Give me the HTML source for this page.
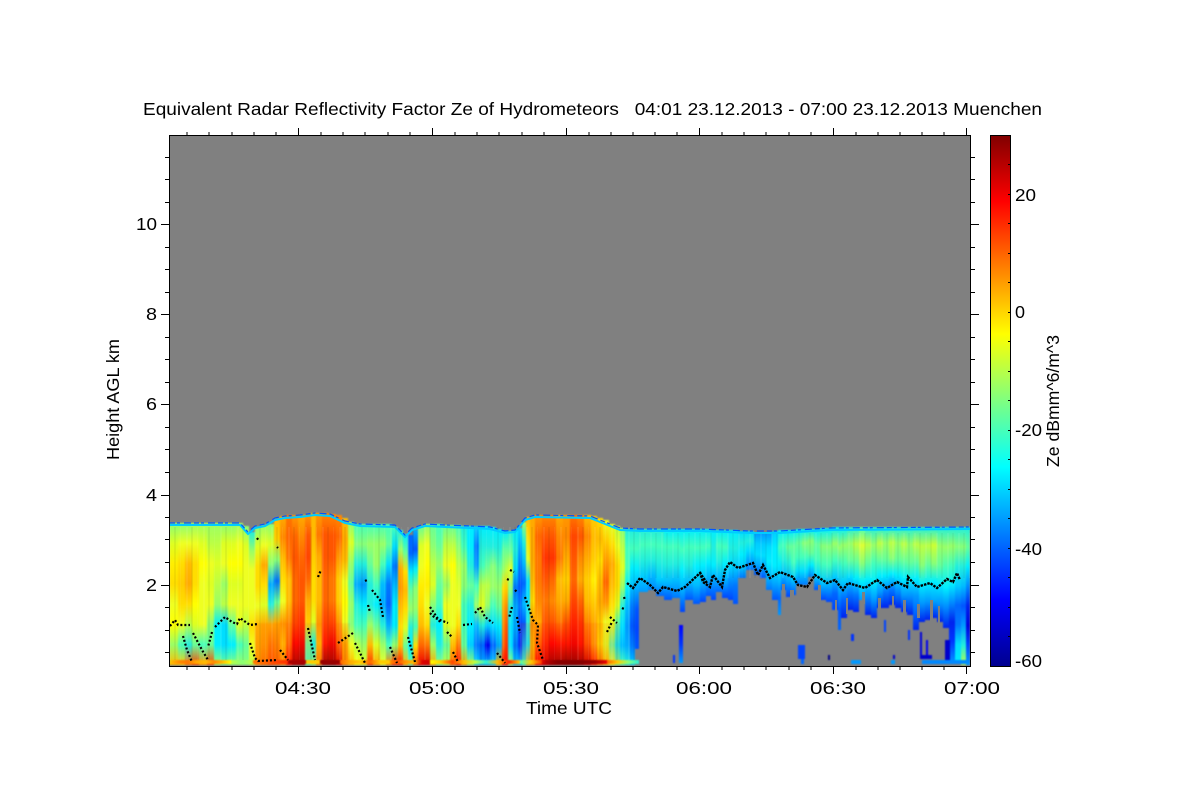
<!DOCTYPE html>
<html><head><meta charset="utf-8"><title>Radar Reflectivity</title>
<style>
html,body{margin:0;padding:0;background:#fff}
body{width:1200px;height:800px;overflow:hidden;position:relative}
#g{position:absolute;left:169px;top:135px;width:801px;height:531px;background:#808080;overflow:hidden}
#d{position:absolute;left:-169px;top:-135px;width:1200px;height:665px;filter:blur(.7px)}
#d i{position:absolute;display:block;bottom:0}
#d i.r{bottom:auto}
#s{position:absolute;left:0;top:392px;width:470px;height:133px;background:repeating-linear-gradient(90deg,rgba(255,255,255,.07) 0 2px,rgba(0,0,0,0) 2px 5px,rgba(0,0,0,.05) 5px 7px,rgba(0,0,0,0) 7px 11px,rgba(255,255,255,.05) 11px 12px,rgba(0,0,0,0) 12px 17px)}
#t{position:absolute;left:470px;top:398px;width:331px;height:45px;background:repeating-linear-gradient(90deg,rgba(255,255,255,.07) 0 2px,rgba(0,0,0,0) 2px 5px,rgba(0,0,0,.04) 5px 7px,rgba(0,0,0,0) 7px 11px)}
#c{position:absolute;left:990px;top:135px;width:20px;height:531px;background:linear-gradient(to top,#00008f 0,#00f 12.5%,#0ff 37.5%,#ff0 62.5%,#f00 87.5%,#800000 100%)}
svg{position:absolute;left:0;top:0}
text{font-family:"Liberation Sans",sans-serif;fill:#000}
</style></head><body>
<div id="g"><div id="d">
<i style="left:169px;width:9px;top:523px;background:linear-gradient(#8f7,#df2,#fe0,#fd0,#ef2,#ff0,#9f6,#fb0)"></i>
<i style="left:178px;width:7px;top:523px;background:linear-gradient(#8f7,#ef2,#fd0,#fc0,#fd0,#ef2,#4fb,#fc0)"></i>
<i style="left:185px;width:7px;top:523px;background:linear-gradient(#8f7,#ef2,#fb0,#fa0,#fd0,#bf4,#2ed,#f70)"></i>
<i style="left:192px;width:7px;top:523px;background:linear-gradient(#9f6,#ef2,#fd0,#fd0,#ff0,#df2,#6f9,#f40)"></i>
<i style="left:199px;width:8px;top:523px;background:linear-gradient(#9f6,#df2,#ff0,#ef2,#ef2,#ef2,#4fb,#f90)"></i>
<i style="left:207px;width:7px;top:523px;background:linear-gradient(#9f6,#bf4,#ef2,#df2,#ef2,#8f7,#6f9,#f40)"></i>
<i style="left:214px;width:7px;top:523px;background:linear-gradient(#9f6,#bf4,#df2,#bf4,#9f6,#0ef,#0ef,#9f6)"></i>
<i style="left:221px;width:7px;top:523px;background:linear-gradient(#8f7,#df2,#ef2,#9f6,#bf4,#0df,#0df,#6f9)"></i>
<i style="left:228px;width:8px;top:523px;background:linear-gradient(#8f7,#df2,#ff0,#df2,#ef2,#6f9,#0ef,#8f7)"></i>
<i style="left:236px;width:7px;top:523px;background:linear-gradient(#9f6,#ef2,#ff0,#df2,#ef2,#df2,#4fb,#9f6)"></i>
<i style="left:243px;width:6px;top:526px;background:linear-gradient(#8f7,#df2,#ef2,#ef2,#ef2,#bf4,#6f9,#8f7)"></i>
<i style="left:249px;width:6px;top:532px;background:linear-gradient(#2ed,#9f6,#ef2,#ef2,#ef2,#fd0,#ef2,#bf4)"></i>
<i style="left:255px;width:6px;top:527px;background:linear-gradient(#8f7,#df2,#fd0,#fd0,#ef2,#fb0,#fa0,#f90)"></i>
<i style="left:261px;width:7px;top:525px;background:linear-gradient(#9f6,#ef2,#fa0,#fd0,#df2,#fa0,#f90,#f70)"></i>
<i style="left:268px;width:6px;top:524px;background:linear-gradient(#8f7,#df2,#8f7,#0af,#2ed,#fa0,#f70,#f50)"></i>
<i style="left:274px;width:6px;top:518px;background:linear-gradient(#fb0,#fc0,#8f7,#07f,#6f9,#fa0,#f80,#f60)"></i>
<i style="left:280px;width:6px;top:516px;background:linear-gradient(#fa0,#f80,#fb0,#fd0,#ef2,#f90,#fb0,#f80)"></i>
<i style="left:286px;width:6px;top:515px;background:linear-gradient(#f70,#f60,#f70,#fb0,#fb0,#f80,#f60,#f10)"></i>
<i style="left:292px;width:6px;top:515px;background:linear-gradient(#f90,#f60,#f50,#f60,#f60,#f40,#f00,#a00)"></i>
<i style="left:298px;width:7px;top:515px;background:linear-gradient(#fa0,#f80,#f60,#f50,#f50,#f30,#e00,#900)"></i>
<i style="left:305px;width:6px;top:514px;background:linear-gradient(#f90,#f50,#f40,#f60,#fa0,#fc0,#6f9,#4fb)"></i>
<i style="left:311px;width:5px;top:513px;background:linear-gradient(#fb0,#fb0,#fc0,#fd0,#fd0,#df2,#0ff,#8f7)"></i>
<i style="left:316px;width:6px;top:513px;background:linear-gradient(#f90,#f70,#fa0,#fb0,#fb0,#f90,#fb0,#f70)"></i>
<i style="left:322px;width:7px;top:513px;background:linear-gradient(#f80,#f50,#f50,#f60,#f60,#f40,#f10,#900)"></i>
<i style="left:329px;width:7px;top:514px;background:linear-gradient(#f80,#f50,#f50,#f70,#f70,#f40,#e00,#900)"></i>
<i style="left:336px;width:6px;top:515px;background:linear-gradient(#f80,#f60,#f90,#fc0,#fc0,#f90,#f60,#d00)"></i>
<i style="left:342px;width:6px;top:518px;background:linear-gradient(#fb0,#fa0,#fb0,#ef2,#ff0,#ef2,#fa0,#f80)"></i>
<i style="left:348px;width:6px;top:522px;background:linear-gradient(#8f7,#df2,#9f6,#6f9,#9f6,#8f7,#ef2,#fb0)"></i>
<i style="left:354px;width:6px;top:524px;background:linear-gradient(#4fb,#8f7,#2ed,#0af,#2ed,#4fb,#bf4,#ff0)"></i>
<i style="left:360px;width:7px;top:524px;background:linear-gradient(#4fb,#8f7,#2ed,#09f,#0ef,#4fb,#9f6,#df2)"></i>
<i style="left:367px;width:6px;top:524px;background:linear-gradient(#4fb,#9f6,#6f9,#2ed,#2ed,#9f6,#fb0,#f30)"></i>
<i style="left:373px;width:7px;top:524px;background:linear-gradient(#4fb,#9f6,#9f6,#4fb,#0ef,#6f9,#df2,#fa0)"></i>
<i style="left:380px;width:6px;top:524px;background:linear-gradient(#4fb,#9f6,#4fb,#0bf,#0af,#2ed,#9f6,#ef2)"></i>
<i style="left:386px;width:6px;top:524px;background:linear-gradient(#4fb,#6f9,#0df,#07f,#06f,#0af,#4fb,#f80)"></i>
<i style="left:392px;width:6px;top:527px;background:linear-gradient(#4fb,#0df,#07f,#0bf,#0ef,#0ef,#9f6,#f20)"></i>
<i style="left:398px;width:5px;top:530px;background:linear-gradient(#2ed,#9f6,#fa0,#f90,#fb0,#fd0,#fb0,#f10)"></i>
<i style="left:403px;width:5px;top:534px;background:linear-gradient(#0ef,#6f9,#fd0,#fb0,#fd0,#df2,#6f9,#fb0)"></i>
<i style="left:408px;width:5px;top:535px;background:linear-gradient(#06f,#06f,#0ef,#6f9,#9f6,#2ed,#0ef,#6f9)"></i>
<i style="left:413px;width:5px;top:530px;background:linear-gradient(#0af,#05f,#0ef,#8f7,#9f6,#4fb,#fd0,#f50)"></i>
<i style="left:418px;width:6px;top:526px;background:linear-gradient(#6f9,#df2,#ef2,#fe0,#fd0,#fb0,#f60,#e00)"></i>
<i style="left:424px;width:6px;top:524px;background:linear-gradient(#8f7,#ef2,#ff0,#fe0,#ef2,#fd0,#f70,#d00)"></i>
<i style="left:430px;width:6px;top:524px;background:linear-gradient(#6f9,#8f7,#bf4,#df2,#8f7,#2ed,#9f6,#fa0)"></i>
<i style="left:436px;width:7px;top:524px;background:linear-gradient(#4fb,#6f9,#9f6,#6f9,#4fb,#0ef,#2ed,#8f7)"></i>
<i style="left:443px;width:7px;top:525px;background:linear-gradient(#6f9,#bf4,#ef2,#9f6,#ef2,#df2,#6f9,#bf4)"></i>
<i style="left:450px;width:6px;top:525px;background:linear-gradient(#6f9,#bf4,#ff0,#ef2,#ef2,#ef2,#fb0,#f60)"></i>
<i style="left:456px;width:5px;top:525px;background:linear-gradient(#4fb,#8f7,#bf4,#df2,#ef2,#fd0,#f70,#f10)"></i>
<i style="left:461px;width:6px;top:526px;background:linear-gradient(#2ed,#4fb,#9f6,#8f7,#4fb,#4fb,#6f9,#fa0)"></i>
<i style="left:467px;width:7px;top:526px;background:linear-gradient(#0ef,#0ef,#2ed,#6f9,#2ed,#0ef,#0cf,#9f6)"></i>
<i style="left:474px;width:5px;top:526px;background:linear-gradient(#0cf,#07f,#09f,#4fb,#9f6,#0bf,#07f,#0df)"></i>
<i style="left:479px;width:6px;top:526px;background:linear-gradient(#0ef,#2ed,#4fb,#bf4,#df2,#2ed,#06f,#0af)"></i>
<i style="left:485px;width:5px;top:526px;background:linear-gradient(#0ef,#2ed,#6f9,#bf4,#9f6,#0cf,#00e,#0bf)"></i>
<i style="left:490px;width:6px;top:527px;background:linear-gradient(#0ef,#2ed,#8f7,#9f6,#4fb,#0df,#06f,#0cf)"></i>
<i style="left:496px;width:6px;top:529px;background:linear-gradient(#0ef,#2ed,#6f9,#9f6,#6f9,#0ef,#0af,#fb0)"></i>
<i style="left:502px;width:3px;top:531px;background:linear-gradient(#0ef,#6f9,#9f6,#fd0,#fa0,#f80,#f60,#f00)"></i>
<i style="left:505px;width:3px;top:531px;background:linear-gradient(#0ef,#6f9,#bf4,#fc0,#f80,#f50,#f30,#f00)"></i>
<i style="left:508px;width:5px;top:531px;background:linear-gradient(#2ed,#6f9,#df2,#8f7,#2ed,#0df,#0df,#9f6)"></i>
<i style="left:513px;width:5px;top:530px;background:linear-gradient(#0ef,#2ed,#0df,#07f,#0af,#0af,#07f,#0cf)"></i>
<i style="left:518px;width:4px;top:528px;background:linear-gradient(#0df,#0af,#07f,#05f,#07f,#04f,#03f,#0cf)"></i>
<i style="left:522px;width:4px;top:522px;background:linear-gradient(#9f6,#2ed,#0bf,#06f,#0bf,#05f,#0af,#4fb)"></i>
<i style="left:526px;width:4px;top:517px;background:linear-gradient(#fb0,#fd0,#df2,#0df,#0df,#2ed,#0ef,#fb0)"></i>
<i style="left:530px;width:5px;top:516px;background:linear-gradient(#fa0,#fa0,#fa0,#fb0,#fd0,#f90,#fb0,#f90)"></i>
<i style="left:535px;width:7px;top:515px;background:linear-gradient(#f90,#f60,#f70,#f70,#f80,#fa0,#f60,#f00)"></i>
<i style="left:542px;width:7px;top:515px;background:linear-gradient(#f80,#f50,#f30,#f50,#f70,#f50,#f20,#c00)"></i>
<i style="left:549px;width:7px;top:515px;background:linear-gradient(#f80,#f50,#f30,#f60,#f80,#f50,#f00,#900)"></i>
<i style="left:556px;width:7px;top:515px;background:linear-gradient(#fa0,#f80,#f70,#fb0,#fa0,#f70,#f10,#900)"></i>
<i style="left:563px;width:7px;top:515px;background:linear-gradient(#f90,#f80,#fa0,#fc0,#fa0,#f50,#f10,#800)"></i>
<i style="left:570px;width:7px;top:515px;background:linear-gradient(#f70,#f40,#f50,#f60,#f40,#f20,#e00,#800)"></i>
<i style="left:577px;width:7px;top:515px;background:linear-gradient(#f80,#f50,#f80,#fa0,#f60,#f30,#f10,#900)"></i>
<i style="left:584px;width:7px;top:515px;background:linear-gradient(#fb0,#f80,#fa0,#fc0,#fb0,#f80,#f50,#c00)"></i>
<i style="left:591px;width:6px;top:516px;background:linear-gradient(#fc0,#fb0,#fc0,#fe0,#fc0,#fa0,#f90,#f20)"></i>
<i style="left:597px;width:6px;top:518px;background:linear-gradient(#fd0,#fb0,#fd0,#fb0,#fa0,#fc0,#fd0,#f70)"></i>
<i style="left:603px;width:6px;top:520px;background:linear-gradient(#ef2,#fc0,#f90,#f60,#f90,#ef2,#df2,#fb0)"></i>
<i style="left:609px;width:6px;top:524px;background:linear-gradient(#df2,#fd0,#fa0,#fb0,#fd0,#df2,#6f9,#ef2)"></i>
<i style="left:615px;width:5px;top:526px;background:linear-gradient(#bf4,#ef2,#fd0,#fd0,#df2,#4fb,#0ef,#8f7)"></i>
<i style="left:620px;width:5px;top:528px;background:linear-gradient(#8f7,#bf4,#df2,#9f6,#2ed,#0df,#0bf,#4fb)"></i>
<i style="left:625px;width:5px;top:529px;background:linear-gradient(#2ed,#4fb,#4fb,#0ef,#0bf,#09f,#0af,#2ed)"></i>
<i style="left:630px;width:5px;top:529px;background:linear-gradient(#2ed,#4fb,#0ef,#0bf,#07f,#05f,#07f,#0cf)"></i>
<i style="left:635px;width:4px;top:529px;height:120px;bottom:auto;background:linear-gradient(#2ed,#4fb,#0ef,#0af,#05f,#04f,#05f)"></i>

<i class="r" style="left:639px;width:9px;top:529px;height:63px;background:linear-gradient(#2ed,#4fb,#2ed,#0cf,#09f)"></i>
<i class="r" style="left:648px;width:8px;top:529px;height:61px;background:linear-gradient(#2ed,#4fb,#2ed,#0bf,#08f)"></i>
<i class="r" style="left:656px;width:8px;top:529px;height:67px;background:linear-gradient(#2ed,#4fb,#2ed,#0cf,#06f)"></i>
<i class="r" style="left:664px;width:8px;top:529px;height:71px;background:linear-gradient(#0ef,#4fb,#2ed,#0bf,#05f)"></i>
<i class="r" style="left:672px;width:8px;top:529px;height:69px;background:linear-gradient(#0ef,#4fb,#2ed,#0bf,#07f)"></i>
<i class="r" style="left:680px;width:5px;top:529px;height:83px;background:linear-gradient(#0ef,#4fb,#0ef,#0af,#04f)"></i>
<i class="r" style="left:685px;width:8px;top:529px;height:71px;background:linear-gradient(#0ef,#4fb,#2ed,#0bf,#05f)"></i>
<i class="r" style="left:693px;width:7px;top:529px;height:75px;background:linear-gradient(#0ef,#4fb,#0ef,#0bf,#05f)"></i>
<i class="r" style="left:700px;width:6px;top:529px;height:73px;background:linear-gradient(#0ef,#4fb,#0ef,#0af,#04f)"></i>
<i class="r" style="left:706px;width:5px;top:529px;height:67px;background:linear-gradient(#0ef,#4fb,#0ef,#0af,#05f)"></i>
<i class="r" style="left:711px;width:5px;top:530px;height:70px;background:linear-gradient(#0ef,#2ed,#0ef,#09f,#04f)"></i>
<i class="r" style="left:716px;width:6px;top:530px;height:62px;background:linear-gradient(#0ef,#4fb,#2ed,#0bf,#06f)"></i>
<i class="r" style="left:722px;width:6px;top:530px;height:68px;background:linear-gradient(#0ef,#4fb,#0ef,#0af,#04f)"></i>
<i class="r" style="left:728px;width:5px;top:530px;height:70px;background:linear-gradient(#0ef,#2ed,#0df,#08f,#04f)"></i>
<i class="r" style="left:733px;width:5px;top:530px;height:74px;background:linear-gradient(#0ef,#2ed,#0cf,#07f,#05f)"></i>
<i class="r" style="left:738px;width:8px;top:531px;height:47px;background:linear-gradient(#0df,#2ed,#0ef,#0cf,#07f)"></i>
<i class="r" style="left:746px;width:8px;top:531px;height:39px;background:linear-gradient(#0df,#2ed,#0df,#0af,#07f)"></i>
<i class="r" style="left:754px;width:6px;top:533px;height:42px;background:linear-gradient(#09f,#0cf,#0df,#0af,#05f)"></i>
<i class="r" style="left:760px;width:6px;top:533px;height:45px;background:linear-gradient(#09f,#0cf,#0df,#0af,#05f)"></i>
<i class="r" style="left:766px;width:6px;top:533px;height:57px;background:linear-gradient(#09f,#0df,#0ef,#0bf,#07f)"></i>
<i class="r" style="left:772px;width:6px;top:531px;height:69px;background:linear-gradient(#0cf,#0ef,#0ef,#0af,#05f)"></i>
<i class="r" style="left:778px;width:3px;top:530px;height:85px;background:linear-gradient(#0ef,#4fb,#0ef,#0bf,#06f,#09f)"></i>
<i class="r" style="left:781px;width:5px;top:530px;height:60px;background:linear-gradient(#0ef,#4fb,#2ed,#0bf,#05f)"></i>
<i class="r" style="left:786px;width:5px;top:530px;height:67px;background:linear-gradient(#0ef,#6f9,#2ed,#0af,#04f)"></i>
<i class="r" style="left:791px;width:5px;top:530px;height:65px;background:linear-gradient(#0ef,#6f9,#4fb,#0cf,#05f)"></i>
<i class="r" style="left:796px;width:6px;top:529px;height:56px;background:linear-gradient(#0ef,#6f9,#4fb,#0df,#07f)"></i>
<i class="r" style="left:802px;width:6px;top:529px;height:56px;background:linear-gradient(#0ef,#8f7,#4fb,#0df,#07f)"></i>
<i class="r" style="left:808px;width:6px;top:529px;height:48px;background:linear-gradient(#0ef,#8f7,#6f9,#0ef,#08f)"></i>
<i class="r" style="left:814px;width:6px;top:529px;height:61px;background:linear-gradient(#0ef,#6f9,#4fb,#0df,#05f)"></i>
<i class="r" style="left:820px;width:6px;top:528px;height:72px;background:linear-gradient(#0ef,#8f7,#4fb,#0cf,#04f)"></i>
<i class="r" style="left:826px;width:6px;top:528px;height:74px;background:linear-gradient(#0ef,#8f7,#4fb,#0bf,#04f)"></i>
<i class="r" style="left:832px;width:6px;top:527px;height:83px;background:linear-gradient(#0ef,#9f6,#4fb,#0cf,#06f,#04f)"></i>
<i class="r" style="left:838px;width:3px;top:527px;height:103px;background:linear-gradient(#0ef,#9f6,#2ed,#0af,#05f,#06f)"></i>
<i class="r" style="left:841px;width:6px;top:527px;height:91px;background:linear-gradient(#0ef,#9f6,#4fb,#0cf,#06f,#02e)"></i>
<i class="r" style="left:847px;width:6px;top:527px;height:83px;background:linear-gradient(#2ed,#9f6,#6f9,#0df,#07f,#02e)"></i>
<i class="r" style="left:853px;width:6px;top:527px;height:85px;background:linear-gradient(#2ed,#bf4,#6f9,#0ef,#07f,#02e)"></i>
<i class="r" style="left:859px;width:6px;top:527px;height:73px;background:linear-gradient(#4fb,#df3,#8f7,#0ef,#09f)"></i>
<i class="r" style="left:865px;width:6px;top:527px;height:88px;background:linear-gradient(#2ed,#bf4,#6f9,#0ef,#08f,#02e)"></i>
<i class="r" style="left:871px;width:6px;top:527px;height:91px;background:linear-gradient(#2ed,#9f6,#4fb,#0ef,#09f,#02e)"></i>
<i class="r" style="left:877px;width:6px;top:527px;height:81px;background:linear-gradient(#2ed,#bf4,#6f9,#0ef,#09f,#02e)"></i>
<i class="r" style="left:883px;width:6px;top:527px;height:81px;background:linear-gradient(#2ed,#9f6,#6f9,#0ef,#07f,#02e)"></i>
<i class="r" style="left:889px;width:6px;top:527px;height:78px;background:linear-gradient(#2ed,#bf4,#8f7,#0ef,#07f,#02e)"></i>
<i class="r" style="left:895px;width:6px;top:527px;height:81px;background:linear-gradient(#2ed,#9f6,#6f9,#0ef,#08f,#02e)"></i>
<i class="r" style="left:901px;width:6px;top:527px;height:85px;background:linear-gradient(#2ed,#bf4,#6f9,#0ef,#09f,#02e)"></i>
<i class="r" style="left:907px;width:6px;top:527px;height:88px;background:linear-gradient(#2ed,#9f6,#6f9,#0ef,#08f,#02e)"></i>
<i class="r" style="left:913px;width:6px;top:527px;height:103px;background:linear-gradient(#2ed,#bf4,#6f9,#0ef,#09f,#06f,#02e)"></i>
<i class="r" style="left:919px;width:6px;top:527px;height:95px;background:linear-gradient(#2ed,#bf4,#8f7,#0ef,#09f,#02e)"></i>
<i class="r" style="left:925px;width:6px;top:527px;height:93px;background:linear-gradient(#2ed,#bf4,#6f9,#0ef,#09f,#02e)"></i>
<i class="r" style="left:931px;width:6px;top:527px;height:91px;background:linear-gradient(#2ed,#cf3,#8f7,#0ef,#0af,#02e)"></i>
<i class="r" style="left:937px;width:6px;top:527px;height:95px;background:linear-gradient(#2ed,#9f6,#6f9,#0ef,#09f,#02e)"></i>
<i class="r" style="left:943px;width:6px;top:527px;height:101px;background:linear-gradient(#2ed,#9f6,#4fb,#0ef,#08f,#02e)"></i>
<i class="r" style="left:949px;width:6px;top:527px;height:133px;background:linear-gradient(#2ed,#9f6,#4fb,#0ef,#08f,#02e,#03f,#08f)"></i>
<i class="r" style="left:955px;width:6px;top:527px;height:137px;background:linear-gradient(#2ed,#8f7,#2ed,#0cf,#06f,#07f,#0df,#0ef)"></i>
<i class="r" style="left:961px;width:5px;top:527px;height:138px;background:linear-gradient(#2ed,#8f7,#2ed,#0bf,#05f,#09f,#2ed,#bf4)"></i>
<i class="r" style="left:966px;width:4px;top:527px;height:138px;background:linear-gradient(#2ed,#6f9,#0ef,#08f,#02e,#00d,#04f,#09f)"></i>

<i class="r" style="left:679px;width:4px;top:625px;height:38px;background:linear-gradient(#00f,#03f,#09f)"></i>
<i class="r" style="left:673px;width:2px;top:655px;height:8px;background:#03f"></i>
<i class="r" style="left:798px;width:7px;top:645px;height:14px;background:#04f"></i>
<i class="r" style="left:801px;width:3px;top:659px;height:5px;background:#06f"></i>
<i class="r" style="left:851px;width:3px;top:634px;height:7px;background:#03f"></i>
<i class="r" style="left:828px;width:2px;top:655px;height:5px;background:#008"></i>
<i class="r" style="left:851px;width:10px;top:660px;height:4px;background:#09f"></i>
<i class="r" style="left:891px;width:4px;top:660px;height:4px;background:#09f"></i>
<i class="r" style="left:893px;width:2px;top:655px;height:4px;background:#00c"></i>
<i class="r" style="left:920px;width:2px;top:632px;height:25px;background:#00d"></i>
<i class="r" style="left:926px;width:2px;top:640px;height:18px;background:#00e"></i>
<i class="r" style="left:920px;width:12px;top:655px;height:4px;background:#00c"></i>
<i class="r" style="left:922px;width:44px;top:660px;height:4px;background:#08f"></i>
<i class="r" style="left:945px;width:5px;top:640px;height:20px;background:#00c"></i>
<i class="r" style="left:908px;width:2px;top:630px;height:10px;background:#03f"></i>
<i class="r" style="left:884px;width:2px;top:620px;height:12px;background:#04f"></i>

<i class="r" style="left:171px;width:60px;top:660px;height:4px;background:linear-gradient(90deg,#fb0,#f80,#f70,#fa0,#fb0,#f80,#fb0,#ff0)"></i>
<i class="r" style="left:231px;width:22px;top:660px;height:4px;background:linear-gradient(90deg,#bf4,#8f7,#bf4)"></i>
<i class="r" style="left:253px;width:45px;top:660px;height:4px;background:linear-gradient(90deg,#f70,#f60,#f40,#f30,#e00)"></i>
<i class="r" style="left:288px;width:18px;top:660px;height:4px;background:#a00"></i>
<i class="r" style="left:306px;width:14px;top:660px;height:4px;background:#fc0"></i>
<i class="r" style="left:320px;width:20px;top:660px;height:4px;background:#900"></i>
<i class="r" style="left:340px;width:50px;top:660px;height:4px;background:linear-gradient(90deg,#f60,#fa0,#fc0,#f60,#fc0,#fc0)"></i>
<i class="r" style="left:390px;width:40px;top:660px;height:4px;background:linear-gradient(90deg,#f80,#f50,#f90,#fb0,#d00,#c00)"></i>
<i class="r" style="left:430px;width:90px;top:660px;height:4px;background:linear-gradient(90deg,#ff0,#fc0,#f40,#fb0,#bf4,#2ed,#fb0,#f20,#fc0)"></i>
<i class="r" style="left:520px;width:22px;top:660px;height:4px;background:linear-gradient(90deg,#4fb,#fc0,#f30)"></i>
<i class="r" style="left:545px;width:62px;top:660px;height:4px;background:linear-gradient(90deg,#b00,#800,#800,#800,#900,#e00)"></i>
<i class="r" style="left:607px;width:32px;top:660px;height:4px;background:linear-gradient(90deg,#f60,#fc0,#8f7,#2ed)"></i>
<i class="r" style="left:255px;width:95px;top:623px;height:37px;background:rgba(255,70,0,.12)"></i>
<i class="r" style="left:520px;width:100px;top:623px;height:37px;background:rgba(255,40,0,.12)"></i>
</div>
<div id="s"></div><div id="t"></div>
</div>
<div id="c"></div>
<svg width="1200" height="800" viewBox="0 0 1200 800">
<g fill="#808080" shape-rendering="crispEdges">
<rect x="771" y="606" width="5" height="14"/><rect x="782" y="584" width="3" height="12"/><rect x="790" y="590" width="4" height="10"/><rect x="818" y="585" width="3" height="20"/><rect x="835" y="600" width="2" height="12"/><rect x="846" y="598" width="2" height="16"/><rect x="862" y="592" width="3" height="12"/><rect x="878" y="598" width="3" height="14"/><rect x="892" y="596" width="2" height="14"/><rect x="903" y="600" width="3" height="14"/><rect x="917" y="604" width="3" height="14"/><rect x="930" y="600" width="3" height="24"/><rect x="938" y="606" width="2" height="20"/>
</g>
<polyline fill="none" stroke="#0cf" stroke-width="2" points="170,525 240,525 248,534 255,528 265,526 275,520 285,518 300,517 315,515 330,516 345,523 360,526 395,527 405,537 412,530 425,526 445,527 470,528 490,529 505,533 515,532 525,520 535,517 590,518 605,524 620,530 640,531 700,531 750,533 780,533 830,530 970,529"/>
<polyline fill="none" stroke="#05f" stroke-width="1.2" stroke-dasharray="5 2 3 4 7 3" points="170,523 240,523 248,532 255,526 265,524 275,518 285,516 300,515 315,513 330,514 345,521 360,524 395,525 405,535 412,528 425,524 445,525 470,526 490,527 505,531 515,530 525,518 535,515 590,516 605,522 620,528 640,529 700,529 750,531 780,531 830,528 970,527"/>
<path fill="none" stroke="#000" stroke-width="2.2" stroke-dasharray="2 2" d="M170 626L175 620L178 625L190 625M215 627L225 617L232 622L237 624L240 618L247 623L250 625L258 624M183 636L187 650L192 662M193 633L202 650L208 660M212 632L208 647M250 643L255 658L258 661L277 660M280 650L288 660M308 628L315 660M338 643L353 633M355 643L365 663M390 647L397 663M408 637L415 662M430 607L440 622M257 538L259 541M277 547L278 548M318 577L321 570M365 581L367 580M372 590L380 600L383 617M368 605L370 612M430 613L435 618L448 623M463 625L472 624M475 613L480 607L485 617L493 623M453 652L458 662M447 632L452 637M497 653L505 663M525 597L533 620L538 625L537 643L543 660M512 607L509 618M517 617L520 633M510 570L514 572M507 579L509 580M515 590L517 592M610 617L617 623M607 632L612 622M622 608L624 609M624 597L625 600"/>
<path fill="none" stroke="#000" stroke-width="2.4" stroke-dasharray="2.5 1" d="M627 583L633 588L640 578L650 585L658 593L663 587L677 591L685 587L700 573L707 583M700 572L703 582L710 587L713 575L722 587L725 570L730 562L738 568L753 563L758 575L763 565L770 578L780 572L793 577L798 585L807 587L815 575L827 583L835 580L843 590L848 583L865 588L877 580L887 588L897 582L907 587L908 577L917 587L930 583L937 588L947 579L953 582L957 573L960 580"/>
<g stroke="#000" stroke-width="1" fill="none" shape-rendering="crispEdges">
<path d="M169.500 135V667M970.500 135V667M169 135.500H971M169 666.500H971"/>
<path d="M298.500 128V135M432.500 128V135M566.500 128V135M699.500 128V135M833.500 128V135M966.500 128V135M298.500 667V674M432.500 667V674M566.500 667V674M699.500 667V674M833.500 667V674M966.500 667V674"/>
<path d="M187 132V135M209 132V135M232 132V135M254 132V135M276 132V135M321 132V135M343 132V135M365 132V135M388 132V135M410 132V135M455 132V135M477 132V135M499 132V135M522 132V135M544 132V135M589 132V135M611 132V135M633 132V135M655 132V135M677 132V135M722 132V135M744 132V135M766 132V135M789 132V135M811 132V135M856 132V135M878 132V135M900 132V135M922 132V135M944 132V135"/>
<path d="M187 667V670M209 667V670M232 667V670M254 667V670M276 667V670M321 667V670M343 667V670M365 667V670M388 667V670M410 667V670M455 667V670M477 667V670M499 667V670M522 667V670M544 667V670M589 667V670M611 667V670M633 667V670M655 667V670M677 667V670M722 667V670M744 667V670M766 667V670M789 667V670M811 667V670M856 667V670M878 667V670M900 667V670M922 667V670M944 667V670"/>
<path d="M161 224.500H169M161 314.500H169M161 404.500H169M161 495.500H169M161 585.500H169M971 224.500H979M971 314.500H979M971 404.500H979M971 495.500H979M971 585.500H979"/>
<path d="M165 157.500H169M165 179.500H169M165 202.500H169M165 247.500H169M165 269.500H169M165 292.500H169M165 337.500H169M165 359.500H169M165 382.500H169M165 427.500H169M165 449.500H169M165 472.500H169M165 517.500H169M165 539.500H169M165 562.500H169M165 607.500H169M165 630.500H169M165 652.500H169"/>
<path d="M971 157.500H975M971 179.500H975M971 202.500H975M971 247.500H975M971 269.500H975M971 292.500H975M971 337.500H975M971 359.500H975M971 382.500H975M971 427.500H975M971 449.500H975M971 472.500H975M971 517.500H975M971 539.500H975M971 562.500H975M971 607.500H975M971 630.500H975M971 652.500H975"/>
<path d="M990.500 135.500H1010.500V666.500H990.500ZM1008 164.500H1010M1008 194.500H1010M1008 223.500H1010M1008 253.500H1010M1008 282.500H1010M1008 312.500H1010M1008 341.500H1010M1008 371.500H1010M1008 400.500H1010M1008 430.500H1010M1008 459.500H1010M1008 489.500H1010M1008 518.500H1010M1008 548.500H1010M1008 577.500H1010M1008 607.500H1010M1008 636.500H1010"/>
</g>
<text x="143" y="115" font-size="17.500" textLength="899" lengthAdjust="spacingAndGlyphs" xml:space="preserve">Equivalent Radar Reflectivity Factor Ze of Hydrometeors   04:01 23.12.2013 - 07:00 23.12.2013 Muenchen</text>
<g font-size="17.500" lengthAdjust="spacingAndGlyphs">
<text x="136" y="230" textLength="21" lengthAdjust="spacingAndGlyphs">10</text><text x="146" y="320" textLength="11" lengthAdjust="spacingAndGlyphs">8</text><text x="146" y="410" textLength="11" lengthAdjust="spacingAndGlyphs">6</text><text x="146" y="501" textLength="11" lengthAdjust="spacingAndGlyphs">4</text><text x="146" y="591" textLength="11" lengthAdjust="spacingAndGlyphs">2</text>
<text x="275" y="694" textLength="56" lengthAdjust="spacingAndGlyphs">04:30</text><text x="409" y="694" textLength="56" lengthAdjust="spacingAndGlyphs">05:00</text><text x="543" y="694" textLength="56" lengthAdjust="spacingAndGlyphs">05:30</text><text x="676" y="694" textLength="56" lengthAdjust="spacingAndGlyphs">06:00</text><text x="810" y="694" textLength="56" lengthAdjust="spacingAndGlyphs">06:30</text><text x="944" y="694" textLength="56" lengthAdjust="spacingAndGlyphs">07:00</text>
<text x="526" y="714" textLength="86" lengthAdjust="spacingAndGlyphs">Time UTC</text>
<text x="1015" y="201" textLength="21" lengthAdjust="spacingAndGlyphs">20</text><text x="1015" y="318" textLength="10" lengthAdjust="spacingAndGlyphs">0</text><text x="1015" y="436" textLength="27" lengthAdjust="spacingAndGlyphs">-20</text><text x="1015" y="555" textLength="27" lengthAdjust="spacingAndGlyphs">-40</text><text x="1015" y="667" textLength="27" lengthAdjust="spacingAndGlyphs">-60</text>
<text transform="translate(119,460) rotate(-90)" textLength="121" lengthAdjust="spacingAndGlyphs">Height AGL km</text>
<text transform="translate(1059,467) rotate(-90)" textLength="132" lengthAdjust="spacingAndGlyphs">Ze dBmm^6/m^3</text>
</g>
</svg>
</body></html>
